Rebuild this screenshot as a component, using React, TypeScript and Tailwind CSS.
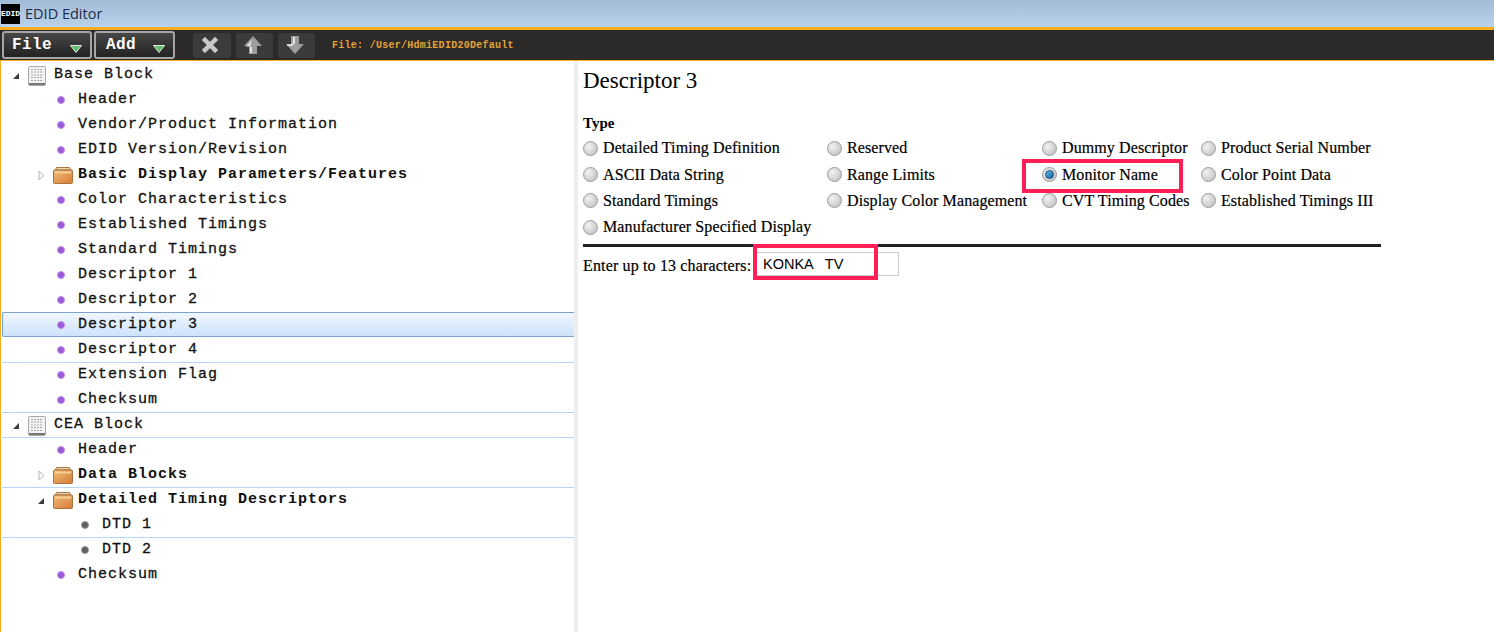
// App.tsx
import React from "react";

const MONO = "font-['Liberation_Mono',monospace]";

const TableIcon = () => (
  <svg width="18" height="20" viewBox="0 0 18 20" className="block shrink-0">
    <rect x="0.5" y="0.5" width="17" height="19" rx="1" fill="#f2f2f2" stroke="#a8a8a8" />
    <rect x="1" y="17" width="16" height="2" fill="#777" />
    <path d="M3 3.5h12M3 6h12M3 9h12M3 11.5h12M3 14.500h12" stroke="#a9a9a9" strokeWidth="1.200" strokeDasharray="2 1" />
  </svg>
);

const FolderIcon = () => (
  <svg width="20" height="17" viewBox="0 0 20 17" className="block shrink-0">
    <defs>
      <linearGradient id="folderBody" x1="0" y1="0" x2="1" y2="1">
        <stop offset="0" stopColor="#f0bd78" />
        <stop offset="1" stopColor="#d67c36" />
      </linearGradient>
    </defs>
    <path d="M2.500 3 L3.500 0.500 H16.500 L17.500 3Z" fill="#e8d2b0" stroke="#a8773f" />
    <rect x="0.500" y="3" width="19" height="13.500" rx="1" fill="url(#folderBody)" stroke="#a8733a" />
    <rect x="2" y="4.500" width="16" height="2" fill="#f7cf96" />
  </svg>
);

const Bullet = ({ gray }: { gray?: boolean }) => (
  <span
    className={
      gray
        ? "w-[8px] h-[8px] -mt-[2px] rounded-full shrink-0 bg-[#5f5f5f] border border-[#9a9a9a]"
        : "w-[8px] h-[8px] -mt-[2px] rounded-full shrink-0 bg-[#9a5ad8] border border-[#bb90ea]"
    }
  />
);

const Toggle = ({ open }: { open: boolean }) =>
  open ? (
    <svg width="8" height="8" viewBox="0 0 8 8" className="shrink-0">
      <path d="M7 1V7H1Z" fill="#3c3c3c" />
    </svg>
  ) : (
    <svg width="7" height="11" viewBox="0 0 7 11" className="shrink-0">
      <path d="M1 1L6 5.500L1 10Z" fill="#fff" stroke="#b5b5b5" />
    </svg>
  );

// one row of the tree; line draws the pale blue rule under it
const Row = ({
  children,
  pad,
  line,
  selected,
}: {
  children: React.ReactNode;
  pad: string;
  line?: boolean;
  selected?: boolean;
}) => (
  <div
    className={[
      "flex items-center h-[25px] pt-[2px] text-[15px] tracking-[1px] text-[#111] whitespace-pre [-webkit-text-stroke:0.3px_#111]",
      pad,
      line ? "shadow-[0_1px_0_#b8d6fb]" : "",
      selected
        ? "bg-gradient-to-b from-[#f1f7fe] to-[#cde3fc] border-y border-l border-[#7da2ce] rounded-l-[2px]"
        : "",
    ].join(" ")}
  >
    {children}
  </div>
);

const Leaf = ({ label, line, selected }: { label: string; line?: boolean; selected?: boolean }) => (
  <Row pad={selected ? "pl-[54px]" : "pl-[55px]"} line={line} selected={selected}>
    <Bullet />
    <span className="ml-[13px]">{label}</span>
  </Row>
);

const Dtd = ({ label, line }: { label: string; line?: boolean }) => (
  <Row pad="pl-[79px]" line={line}>
    <Bullet gray />
    <span className="ml-[13px]">{label}</span>
  </Row>
);

const Root = ({ label, line }: { label: string; line?: boolean }) => (
  <Row pad="pl-[10px]" line={line}>
    <Toggle open />
    <span className="ml-[8px]">
      <TableIcon />
    </span>
    <span className="ml-[8px]">{label}</span>
  </Row>
);

const Folder = ({ label, open, line }: { label: string; open?: boolean; line?: boolean }) => (
  <Row pad={open ? "pl-[35px]" : "pl-[36px]"} line={line}>
    <Toggle open={!!open} />
    <span className="ml-[8px]">
      <FolderIcon />
    </span>
    <span className="ml-[5px] font-bold [-webkit-text-stroke:0px]">{label}</span>
  </Row>
);

const Radio = ({ checked }: { checked?: boolean }) => (
  <span className="w-[15px] h-[15px] rounded-full shrink-0 border border-[#9c9c9c] bg-[radial-gradient(circle_at_35%_35%,#f2f2f2,#b9b9b9)] flex items-center justify-center">
    {checked && (
      <span className="w-[9px] h-[9px] rounded-full bg-gradient-to-br from-[#5cc0ee] to-[#0a5f96] border border-[#1d4f78]" />
    )}
  </span>
);

const Option = ({ label, checked, mark }: { label: string; checked?: boolean; mark?: boolean }) => (
  <label className="relative flex items-center gap-[5px] h-[26.4px] whitespace-nowrap">
    <Radio checked={checked} />
    <span className="tracking-[0.1px] [-webkit-text-stroke:0.2px_#000]">{label}</span>
    {mark && (
      <span className="absolute left-[-20px] top-[-2px] w-[161px] h-[34px] border-[4px] border-[#fd1f55]" />
    )}
  </label>
);

const ToolMenu = ({ label, width, pad }: { label: string; width: string; pad: string }) => (
  <button
    className={[
      "relative h-[28px] rounded-[3px] border-2 border-[#a6a6a6] bg-gradient-to-b from-[#474747] to-[#232323] text-left",
      width,
      pad,
    ].join(" ")}
  >
    <span className="text-[16px] leading-none font-bold tracking-[0.4px] text-white">{label}</span>
    <svg width="12" height="8" viewBox="0 0 12 8" className="absolute right-[8px] bottom-[4px]">
      <path d="M0.500 0.500H11.500L6 7.500Z" fill="#5fbf6b" stroke="#e8e8e8" strokeWidth="1" />
    </svg>
  </button>
);

const ToolIcon = ({ children, width }: { children: React.ReactNode; width: string }) => (
  <div className={["h-[25px] rounded-[3px] bg-[#3b3b3b] flex items-center justify-center pr-[4px]", width].join(" ")}>
    {children}
  </div>
);

const App: React.FC = () => {
  return (
    <div className="w-[1494px] h-[632px] overflow-hidden bg-white flex flex-col">
      {/* title bar */}
      <div className="h-[27px] shrink-0 flex items-center pl-[1px] bg-gradient-to-b from-[#a2bbd7] to-[#b9d2ec]">
        <div className="w-[19px] h-[20px] bg-black flex items-center justify-center text-[8px] leading-none font-bold text-white font-['Liberation_Mono',monospace]">
          EDID
        </div>
        <span className="ml-[5px] text-[14.500px] text-[#1c2b4a] font-['Open_Sans',sans-serif]">EDID Editor</span>
      </div>

      {/* toolbar */}
      <div
        className={`h-[34px] shrink-0 flex items-center gap-[2px] pl-[2px] border-y-[3px] border-[#f8ad21] border-b-[1px] bg-[#2c2929] ${MONO}`}
      >
        <ToolMenu label="File" width="w-[90px]" pad="pl-[8px]" />
        <ToolMenu label="Add" width="w-[81px]" pad="pl-[10px]" />
        <div className="flex gap-[5px] ml-[16px]">
          <ToolIcon width="w-[38px]">
            <svg width="16" height="16" viewBox="0 0 16 16">
              <path d="M3 3L13 13M13 3L3 13" stroke="#c9c9c9" strokeWidth="4.500" strokeLinecap="square" />
            </svg>
          </ToolIcon>
          <ToolIcon width="w-[37px]">
            <svg width="20" height="20" viewBox="0 0 20 20">
              <path d="M10 1L19 11H14V19H6V11H1Z" fill="#9c9c9c" />
              <path d="M9 5L3 11.500H7V18H9V12H7Z" fill="#e4e4e4" />
            </svg>
          </ToolIcon>
          <ToolIcon width="w-[37px]">
            <svg width="20" height="20" viewBox="0 0 20 20">
              <path d="M6 1H14V9H19L10 19L1 9H6Z" fill="#9c9c9c" />
              <path d="M8 2H10V8L7 11H2V9.500H6L8 7.500Z" fill="#e4e4e4" />
            </svg>
          </ToolIcon>
        </div>
        <span className="ml-[15px] text-[10px] tracking-[0.27px] font-bold text-[#e2a535] whitespace-nowrap">
          File: /User/HdmiEDID20Default
        </span>
      </div>

      {/* main area */}
      <div className="flex-1 flex min-h-0 border-l-[1px] border-[#f8ad21]">
        <div className={`w-[573px] shrink-0 pt-[1px] pl-[1px] ${MONO}`}>
          <Root label="Base Block" />
          <Leaf label="Header" />
          <Leaf label="Vendor/Product Information" />
          <Leaf label="EDID Version/Revision" />
          <Folder label="Basic Display Parameters/Features" />
          <Leaf label="Color Characteristics" />
          <Leaf label="Established Timings" />
          <Leaf label="Standard Timings" />
          <Leaf label="Descriptor 1" />
          <Leaf label="Descriptor 2" />
          <Leaf label="Descriptor 3" selected />
          <Leaf label="Descriptor 4" line />
          <Leaf label="Extension Flag" />
          <Leaf label="Checksum" line />
          <Root label="CEA Block" line />
          <Leaf label="Header" />
          <Folder label="Data Blocks" line />
          <Folder label="Detailed Timing Descriptors" open />
          <Dtd label="DTD 1" line />
          <Dtd label="DTD 2" />
          <Leaf label="Checksum" />
        </div>

        <div className="w-[4px] shrink-0 bg-[#eeeeee]" />

        <div className="flex-1 pl-[5px] text-[16px] text-black font-['Liberation_Serif',serif]">
          <h1 className="text-[23px] leading-[26px] mt-[7px]">Descriptor 3</h1>
          <div className="w-[798px] mt-[20px]">
            <div className="font-bold text-[15px] leading-[18px]">Type</div>
            <div className="grid grid-cols-[244px_215px_159px_1fr] mt-[3px]">
              <Option label="Detailed Timing Definition" />
              <Option label="Reserved" />
              <Option label="Dummy Descriptor" />
              <Option label="Product Serial Number" />
              <Option label="ASCII Data String" />
              <Option label="Range Limits" />
              <Option label="Monitor Name" checked mark />
              <Option label="Color Point Data" />
              <Option label="Standard Timings" />
              <Option label="Display Color Management" />
              <Option label="CVT Timing Codes" />
              <Option label="Established Timings III" />
              <Option label="Manufacturer Specified Display" />
            </div>
            <div className="h-[3px] bg-[#222222] mt-[3px]" />
            <div className="flex items-center mt-[4px]">
              <span className="w-[170px] pt-[3px] tracking-[0.15px] whitespace-nowrap [-webkit-text-stroke:0.2px_#000]">
                Enter up to 13 characters:
              </span>
              <div className="relative">
                <input
                  readOnly
                  value="KONKA   TV"
                  className="block w-[146px] h-[24px] border border-[#c8ccd4] pl-[9px] outline-none text-[14.500px] text-black font-['Liberation_Sans',sans-serif]"
                />
                <span className="absolute left-0 top-[-8px] w-[125px] h-[36px] border-[4px] border-[#fd1f55]" />
              </div>
            </div>
          </div>
        </div>
      </div>
    </div>
  );
};

export default App;
